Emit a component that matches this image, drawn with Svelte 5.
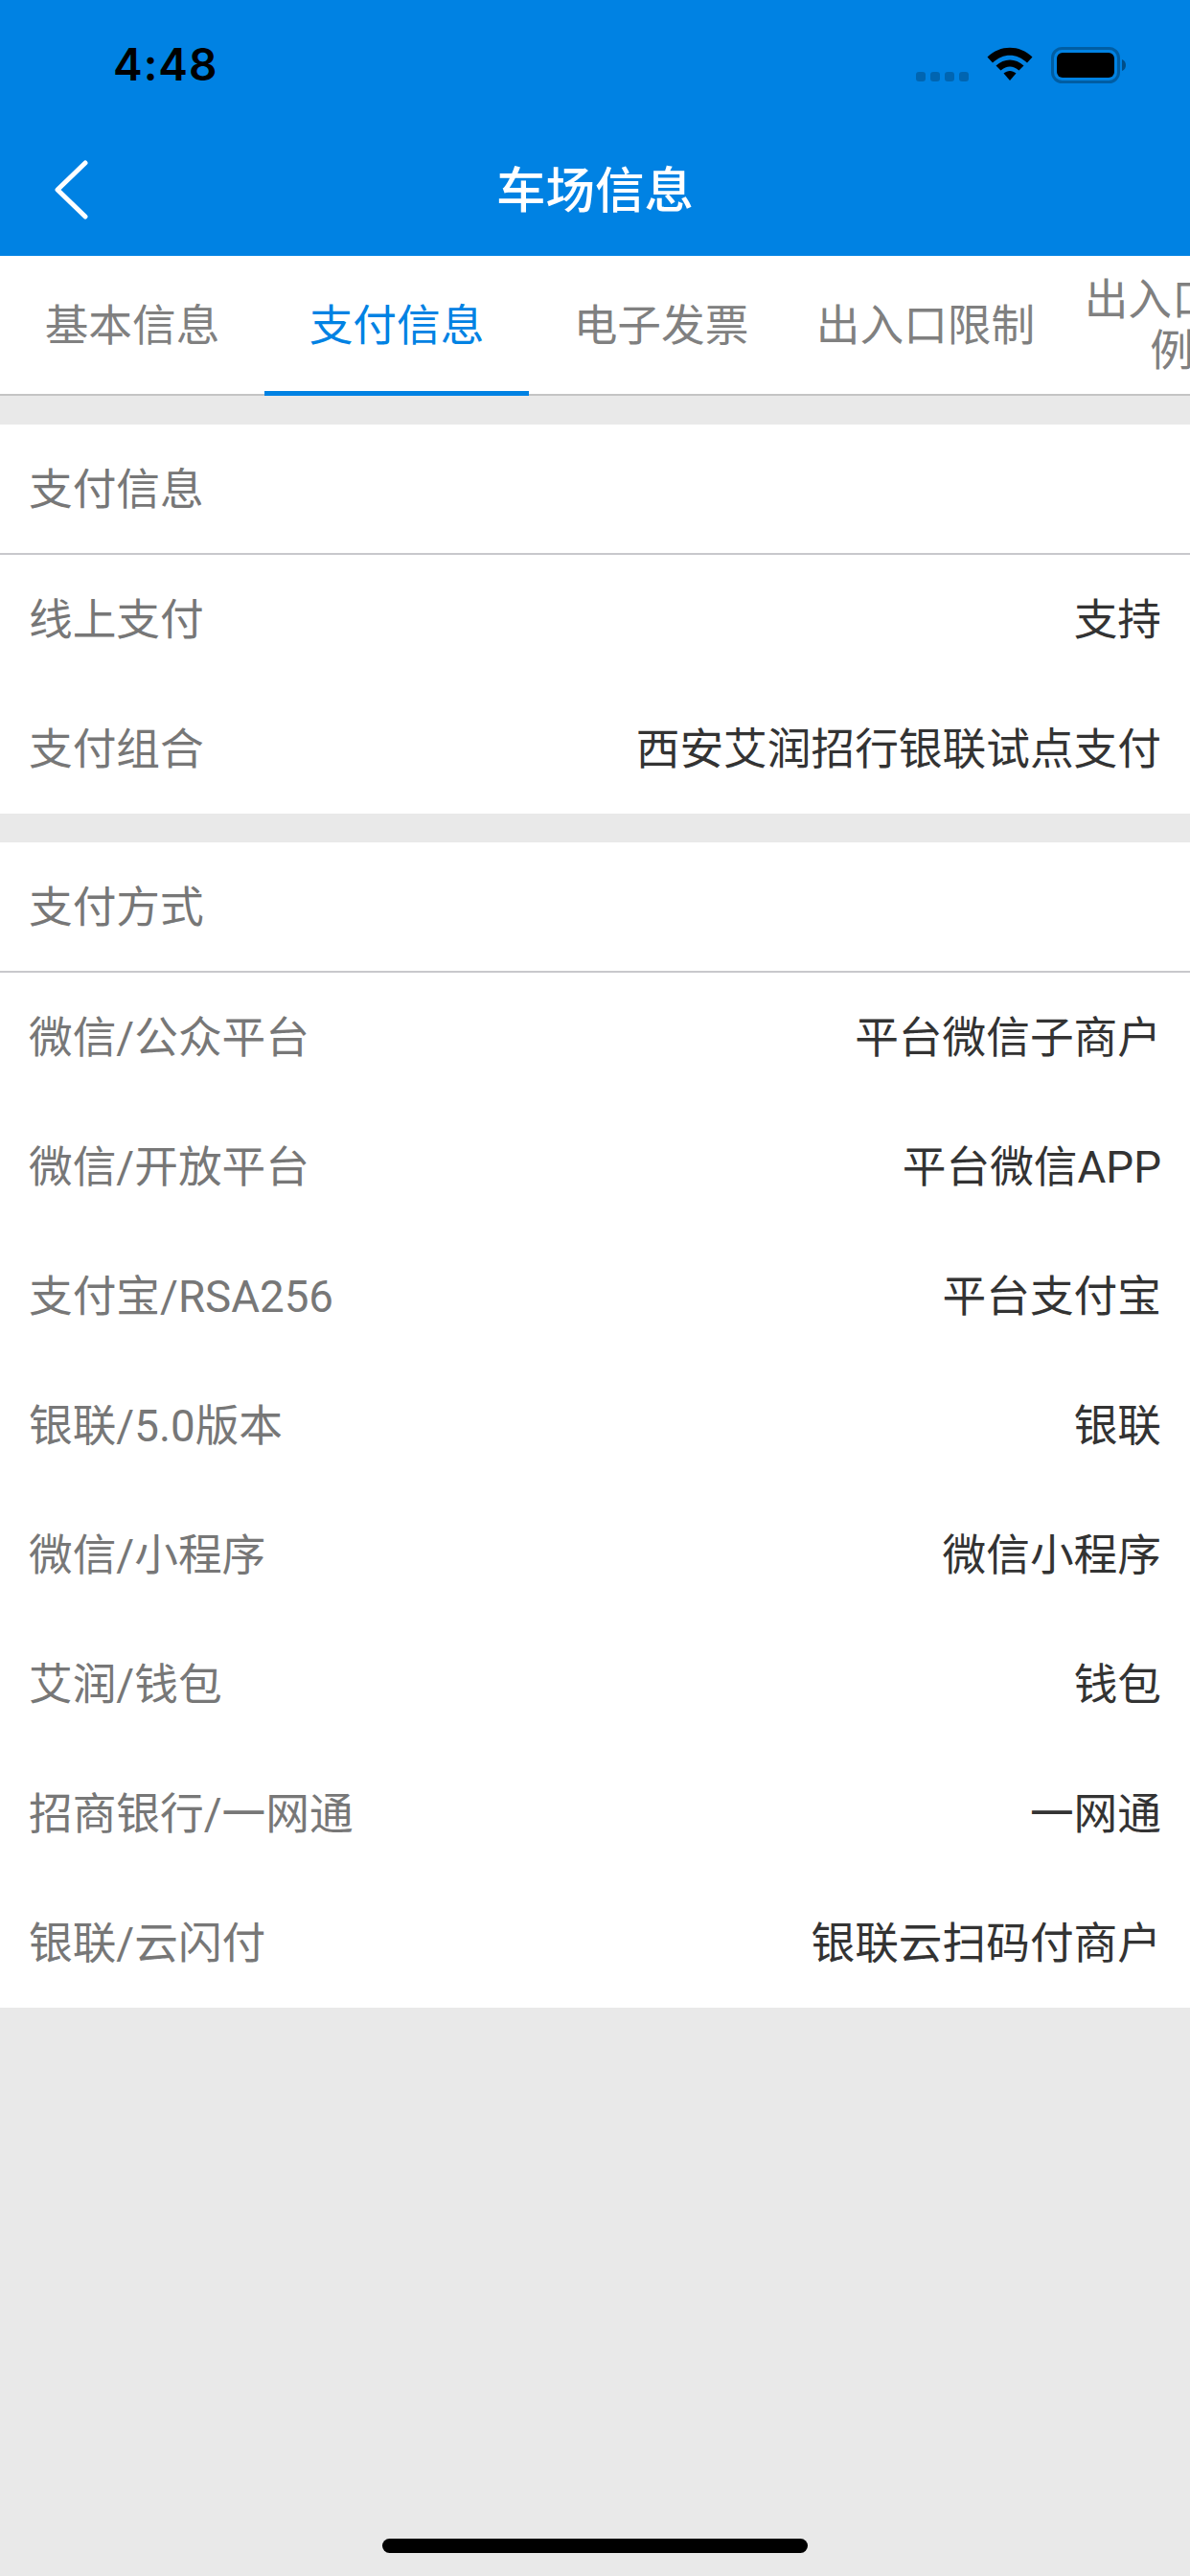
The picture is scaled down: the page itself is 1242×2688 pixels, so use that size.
<script>
  const sections = [
    {
      title: "支付信息",
      rows: [
        ["线上支付", "支持"],
        ["支付组合", "西安艾润招行银联试点支付"],
      ],
    },
    {
      title: "支付方式",
      rows: [
        ["微信/公众平台", "平台微信子商户"],
        ["微信/开放平台", "平台微信APP"],
        ["支付宝/RSA256", "平台支付宝"],
        ["银联/5.0版本", "银联"],
        ["微信/小程序", "微信小程序"],
        ["艾润/钱包", "钱包"],
        ["招商银行/一网通", "一网通"],
        ["银联/云闪付", "银联云扫码付商户"],
      ],
    },
  ];

  const tabs = ["基本信息", "支付信息", "电子发票", "出入口限制", "出入口比例"];
  let active = 1;
</script>

<div class="page">
  <header class="header">
    <div class="status">
      <span class="time">4:48</span>
      <div class="status__icons">
        <div class="signal">
          <i></i><i></i><i></i><i></i>
        </div>
        <svg class="wifi" width="48" height="36" viewBox="0 0 48 36">
          <path d="M0.5 10.5 C14 -2.5 34 -2.5 47.500 10.500 L42 16.500 C31 6 17 6 6 16.500 Z" fill="#000" />
          <path d="M9.500 19.500 C18 11.500 30 11.500 38.500 19.500 L33.500 24.500 C27 19 21 19 14.500 24.500 Z" fill="#000" />
          <path d="M17.500 27.500 C21.500 24 26.500 24 30.500 27.500 L24 35 Z" fill="#000" />
        </svg>
        <svg class="battery" width="80" height="38" viewBox="0 0 80 38">
          <rect x="1.500" y="1.500" width="69" height="35" rx="10" fill="none" stroke="#00000048" stroke-width="3" />
          <rect x="6" y="6" width="60" height="26" rx="6" fill="#000" />
          <path d="M74 13 C77 14 78 16.500 78 19 C78 21.500 77 24 74 25 Z" fill="#00000066" />
        </svg>
      </div>
    </div>
    <div class="nav">
      <svg class="back" width="36" height="62" viewBox="0 0 36 62">
        <path d="M33 3 L4 31 L33 59" fill="none" stroke="#fff" stroke-width="5" stroke-linecap="round" stroke-linejoin="round" />
      </svg>
      <h1>车场信息</h1>
    </div>
  </header>

  <nav class="tabs">
    {#each tabs as tab, i}
      <div class="tab" class:active={i === active}>{tab}</div>
    {/each}
  </nav>

  {#each sections as section}
    <section class="section">
      <div class="section__title">{section.title}</div>
      {#each section.rows as row}
        <div class="row">
          <span class="row__label">{row[0]}</span>
          <span class="row__value">{row[1]}</span>
        </div>
      {/each}
    </section>
  {/each}

  <div class="home"></div>
</div>

<style>
  :global(body) {
    margin: 0;
  }

  .page {
    position: relative;
    width: 1242px;
    height: 2688px;
    overflow: hidden;
    background-color: #e9e9e9;
    font-family: Roboto, "Noto Sans CJK SC", sans-serif;
    font-size: 45.7px;
    line-height: 60px;
  }

  .header {
    height: 267px;
    background-color: #0082e3;
  }

  .status {
    height: 132px;
    display: flex;
    justify-content: space-between;
    padding: 0 65px 0 118px;
    box-sizing: border-box;
  }

  .time {
    margin-top: 37px;
    font-family: Inter, sans-serif;
    font-weight: 600;
    font-size: 46px;
    letter-spacing: 1px;
    color: #000;
  }

  .status__icons {
    display: flex;
    align-items: flex-start;
    padding-top: 49px;
  }

  .signal {
    display: flex;
    gap: 5px;
    margin-top: 26px;
    margin-right: 19px;
  }

  .signal i {
    width: 10px;
    height: 10px;
    border-radius: 3px;
    background-color: #00000038;
  }

  .wifi {
    margin-right: 19px;
  }

  .nav {
    position: relative;
    height: 135px;
    padding-top: 1px;
    box-sizing: border-box;
    display: flex;
    align-items: center;
    justify-content: center;
  }

  .back {
    position: absolute;
    left: 56px;
    top: 35px;
  }

  .nav h1 {
    margin: 0;
    font-size: 51.500px;
    font-weight: 500;
    color: #fff;
  }

  .tabs {
    display: flex;
    height: 146px;
    background-color: #fff;
    border-bottom: 2px solid #c4c4c4;
    box-sizing: border-box;
    margin-bottom: 30px;
  }

  .tab {
    flex: 0 0 276px;
    box-sizing: border-box;
    height: 146px;
    padding: 0 20px;
    display: flex;
    align-items: center;
    justify-content: center;
    text-align: center;
    line-height: 53px;
    color: #808080;
  }

  .tab:last-child {
    flex-basis: 238px;
    padding: 0 27px;
  }

  .tab.active {
    color: #0082e3;
    border-bottom: 5px solid #0082e3;
    padding-top: 5px;
  }

  .section {
    background-color: #fff;
    margin-bottom: 30px;
  }

  .section__title {
    height: 136px;
    box-sizing: border-box;
    padding: 3px 30px 0;
    display: flex;
    align-items: center;
    border-bottom: 2px solid #c8c8cc;
    color: #777;
  }

  .row {
    height: 135px;
    box-sizing: border-box;
    padding: 3px 30px 0;
    display: flex;
    align-items: center;
    justify-content: space-between;
  }

  .row__label {
    color: #777;
  }

  .row__value {
    color: #333;
  }

  .home {
    position: absolute;
    left: 399px;
    top: 2649px;
    width: 444px;
    height: 15px;
    border-radius: 8px;
    background-color: #000;
  }
</style>
